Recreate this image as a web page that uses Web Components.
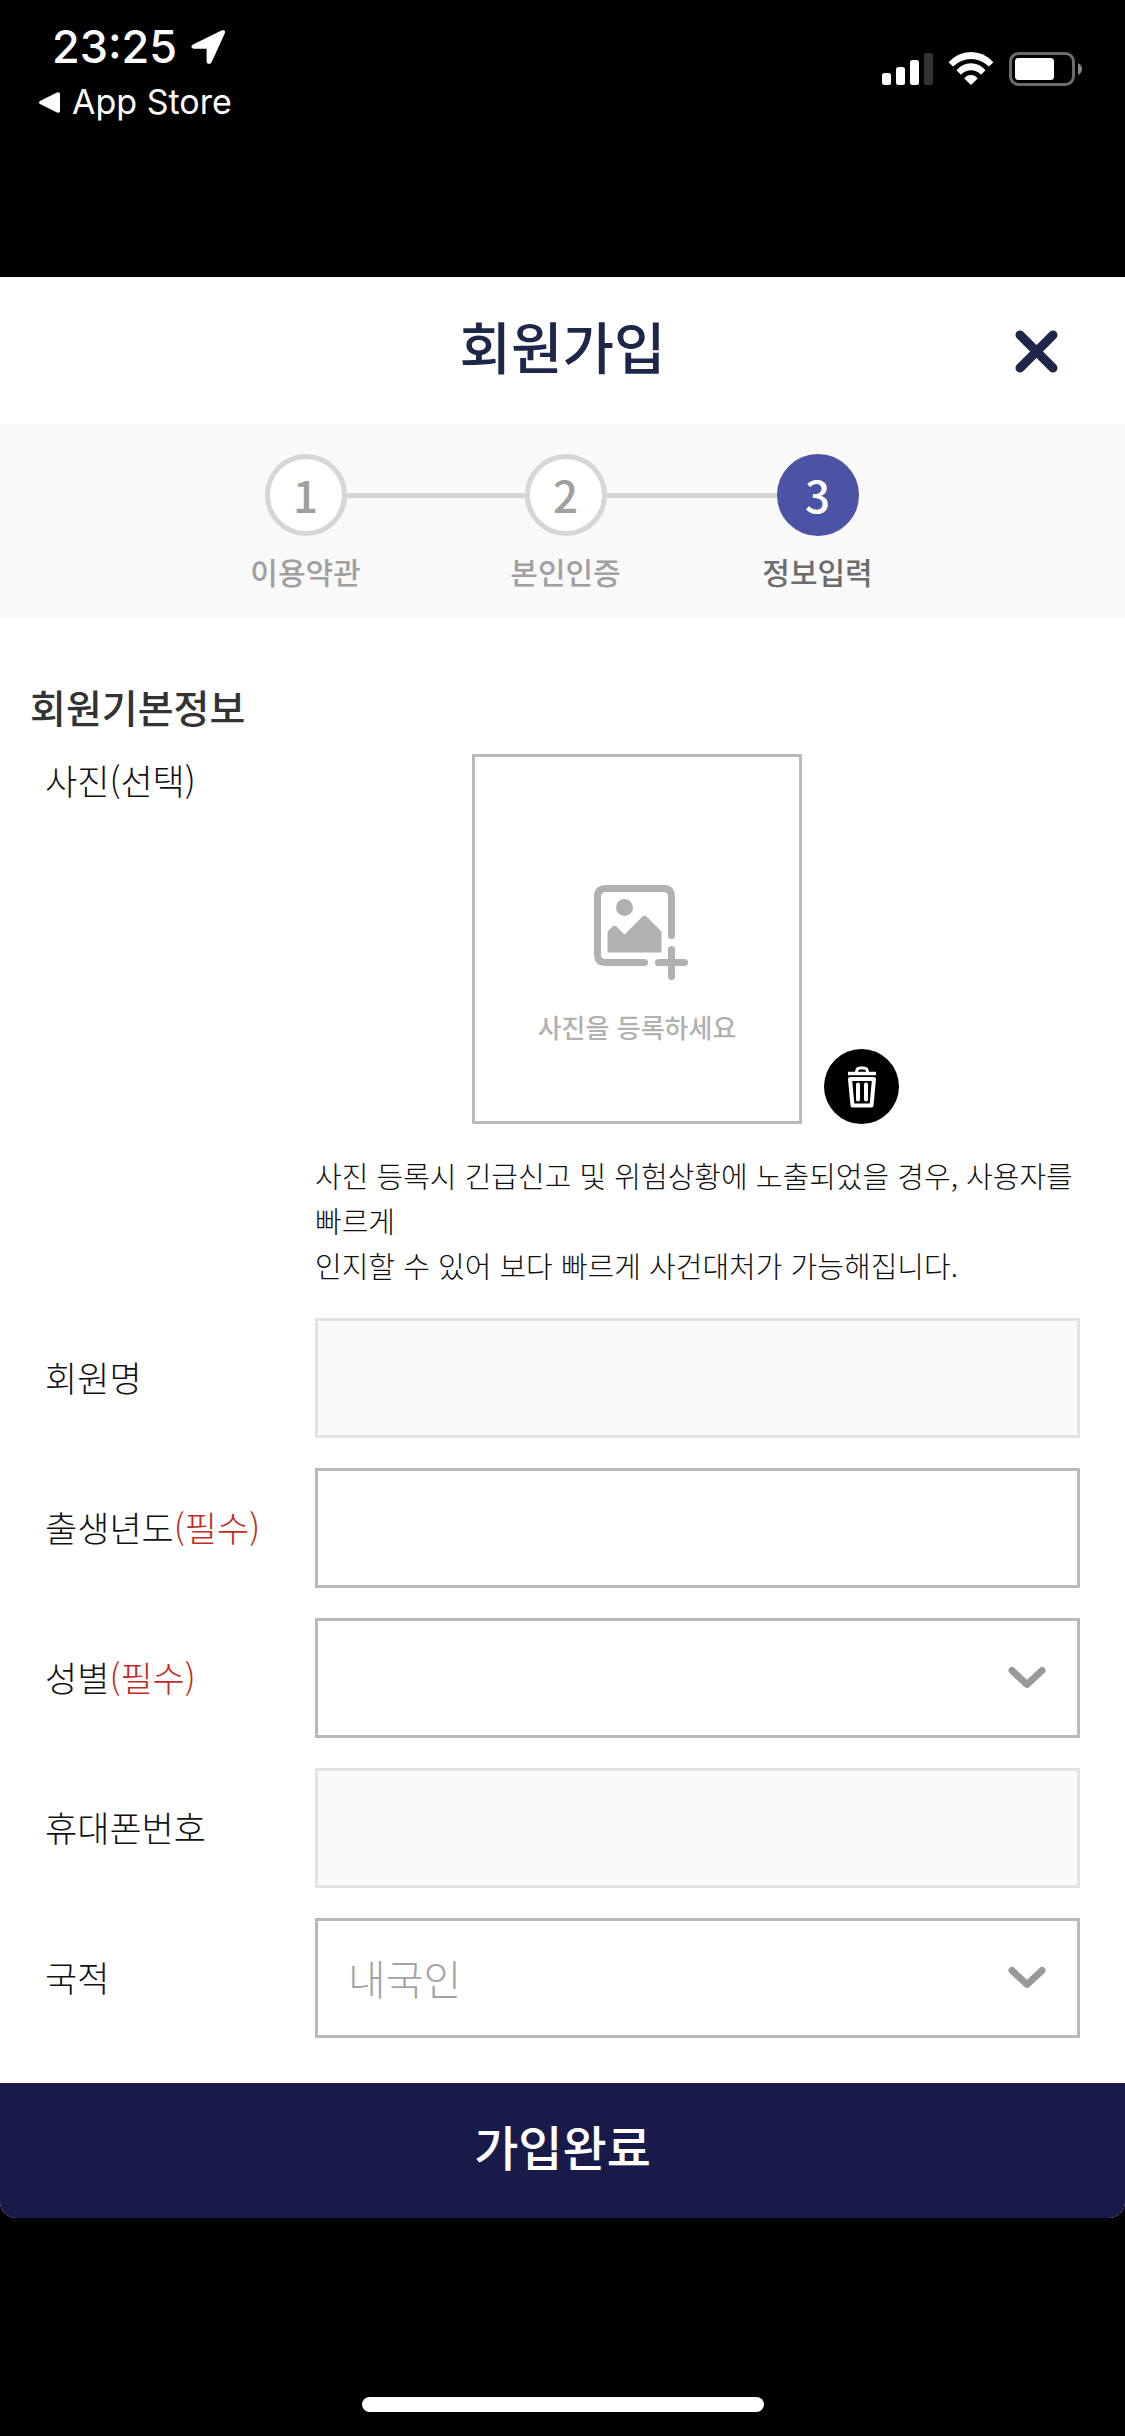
<!DOCTYPE html>
<html lang="ko">
<head>
<meta charset="utf-8">
<meta name="viewport" content="width=device-width, initial-scale=1">
<title>회원가입</title>
<style>
  html, body { margin: 0; background: #000; }
  body { font-family: "Noto Sans CJK KR", sans-serif; color: #111; word-break: keep-all; }
</style>
</head>
<body>
<signup-app></signup-app>

<template id="signup-app">
  <style>
    :host { display: flex; flex-direction: column; min-height: 100vh; background: #000; }
    main { background: #fff; border-radius: 0 0 16px 16px; overflow: hidden; }
    form { margin: 0; }
    .fields { padding: 62px 45px 45px; display: flex; flex-direction: column; gap: 30px; }
    .group { display: flex; flex-direction: column; gap: 23px; }
    h2 { margin: 0 -15px; font-size: 39px; line-height: 50px; font-weight: 500; color: #333; }
  </style>
  <phone-status time="23:25" back="App Store"></phone-status>
  <main>
    <page-header>회원가입</page-header>
    <step-bar>
      <step-item number="1">이용약관</step-item>
      <step-link style="--length: 178px"></step-link>
      <step-item number="2">본인인증</step-item>
      <step-link style="--length: 170px"></step-link>
      <step-item number="3" active>정보입력</step-item>
    </step-bar>
    <form>
      <div class="fields">
        <div class="group">
          <h2>회원기본정보</h2>
          <photo-field label="사진(선택)" prompt="사진을 등록하세요">사진 등록시 긴급신고 및 위험상황에 노출되었을 경우, 사용자를 빠르게<br>인지할 수 있어 보다 빠르게 사건대처가 가능해집니다.</photo-field>
        </div>
        <text-field label="회원명" disabled></text-field>
        <text-field label="출생년도" required></text-field>
        <select-field label="성별" required></select-field>
        <text-field label="휴대폰번호" disabled></text-field>
        <select-field label="국적" value="내국인"></select-field>
      </div>
      <submit-bar>가입완료</submit-bar>
    </form>
  </main>
  <home-indicator></home-indicator>
</template>

<template id="phone-status">
  <style>
    :host { display: flex; justify-content: space-between; align-items: flex-start; box-sizing: border-box; height: 277px; padding: 20px 42px 0 39px; color: #fff; font-family: Inter, sans-serif; }
    .time { display: flex; align-items: center; gap: 14px; padding-left: 13px; font-size: 45px; line-height: 54px; font-weight: 500; }
    .back { display: flex; align-items: center; gap: 12px; font-size: 34px; line-height: 40px; padding-top: 8px; color: #fff; text-decoration: none; }
    .icons { display: flex; align-items: center; gap: 15px; padding-top: 32px; }
    svg { display: block; }
  </style>
  <div>
    <div class="time"><span id="time"></span>
      <svg width="34" height="34" viewBox="0 0 34 34"><path d="M2 14.500 31 .3Q35 -.4 33.700 3.500L20.500 32.500Q19 34.500 16.700 33.600Q15.600 33 15.600 31.500V18.700H2.500Q-1.500 17 2 14.500Z" fill="#fff"/></svg>
    </div>
    <a class="back" href="#">
      <svg width="21" height="21" viewBox="0 0 21 21"><path d="M1 9 18 .5Q21 -.4 21 2V19Q20.800 21.400 18 20.500L1 12Q-1 10.500 1 9Z" fill="#fff"/></svg>
      <span id="back"></span>
    </a>
  </div>
  <div class="icons">
    <svg width="51" height="34" viewBox="0 0 51 34"><g fill="#fff"><rect y="21" width="9" height="12" rx="2.500"/><rect x="14" y="15" width="9" height="18" rx="2.500"/><rect x="28" y="8" width="9" height="25" rx="2.500"/></g><rect x="42" y="1" width="9" height="32" rx="2.500" fill="#333"/></svg>
    <svg width="46" height="34" viewBox="0 0 46 34"><g fill="#fff"><path d="M.6 10.300Q10 0 23 0T45.400 10.300L41 14.600Q33 7 23 7T5 14.600Z"/><path d="M8.500 18.300Q14.500 11.300 23 11.300T37.500 18.300L33 22.700Q29 18.200 23 18.200T13 22.700Z"/><path d="M16.300 26.400Q19 23 23 23T29.700 26.400L23 33Z"/></g></svg>
    <svg width="74" height="34" viewBox="0 0 74 34"><rect x="1.500" y="1.500" width="63" height="31" rx="8" fill="none" stroke="#6b6b6b" stroke-width="3"/><rect x="6" y="6" width="39" height="22" rx="3.500" fill="#fff"/><path d="M69 11Q73 13 73 17T69 23Z" fill="#858585"/></svg>
  </div>
</template>

<template id="page-header">
  <style>
    :host { display: grid; grid-template-columns: 1fr auto 1fr; align-items: center; height: 148px; padding: 0 67px; }
    h1 { grid-column: 2; margin: 0; padding-bottom: 12px; font-size: 56px; line-height: 72px; font-weight: 500; color: #1c2749; }
    button { justify-self: end; border: 0; background: none; padding: 0; cursor: pointer; }
    svg { display: block; }
  </style>
  <h1><slot></slot></h1>
  <button type="button" aria-label="닫기"><svg width="43" height="43" viewBox="0 0 43 43"><path d="M5 5 38 38M38 5 5 38" stroke="#1c2749" stroke-width="9" stroke-linecap="round"/></svg></button>
</template>

<template id="step-bar">
  <style>
    :host { display: flex; justify-content: center; padding: 29px 2px 29px 0; background: #f9f9f9; }
  </style>
  <slot></slot>
</template>

<template id="step-link">
  <style>
    :host { display: block; width: var(--length); height: 5px; margin-top: 39px; background: #d6d6d6; }
  </style>
</template>

<template id="step-item">
  <style>
    :host { display: flex; flex-direction: column; align-items: center; gap: 16px; width: 82px; color: #a0a0a0; }
    .dot { box-sizing: border-box; width: 82px; height: 82px; border: 5px solid #d6d6d6; border-radius: 50%; background: #fff; font-size: 44px; line-height: 70px; font-weight: 500; text-align: center; }
    .name { font-size: 30px; line-height: 38px; font-weight: 500; white-space: nowrap; }
    :host([active]) .dot { border-color: #4b53a5; background: #4b53a5; color: #fff; }
    :host([active]) .name { color: #6c6c6c; }
  </style>
  <div class="dot" id="number"></div>
  <div class="name"><slot></slot></div>
</template>

<template id="photo-field">
  <style>
    :host { display: grid; grid-template-columns: 270px 1fr; row-gap: 29px; }
    label { font-size: 35px; line-height: 52px; font-weight: 300; }
    .row { display: flex; align-items: flex-end; gap: 22px; padding-left: 157px; }
    button { font: inherit; padding: 0; cursor: pointer; }
    .pick { box-sizing: border-box; width: 330px; height: 370px; border: 3px solid #b9b9b9; background: #fff; display: flex; flex-direction: column; align-items: center; justify-content: center; gap: 28px; padding-top: 52px; color: #b1b1b1; font-size: 26px; line-height: 38px; font-weight: 500; }
    .pick svg { margin-left: 8px; }
    .trash { border: 0; background: none; }
    svg { display: block; }
    p { grid-column: 2; margin: 0; font-size: 29px; line-height: 45px; font-weight: 300; }
  </style>
  <label for="pick" id="label"></label>
  <div class="row">
    <button class="pick" id="pick" type="button">
      <svg width="94" height="95" viewBox="0 0 94 95"><path d="M77.500 50.500V12Q77.500 3.500 69.500 3.500H12Q3.500 3.500 3.500 12V69.500Q3.500 77.500 12 77.500H50.500M64.500 77.500H90.500M77.500 64.500V91.500" fill="none" stroke="#b1b1b1" stroke-width="7" stroke-linecap="round"/><circle cx="30.500" cy="22.500" r="8.500" fill="#b1b1b1"/><path d="M13.500 67.500V46.500L18.500 41.500Q20.500 39.800 22.500 41.500L30.500 49.500 48.500 31.500Q50.500 29.800 52.500 31.500L67.500 46.500V67.500Z" fill="#b1b1b1"/></svg>
      <span id="prompt"></span>
    </button>
    <button class="trash" type="button" aria-label="사진 삭제">
      <svg width="75" height="75" viewBox="0 0 75 75"><circle cx="37.500" cy="37.500" r="37.500"/><g fill="none" stroke="#fff"><path d="M24 24.500H52" stroke-width="3.500"/><path d="M32.500 23.500Q32.500 19 36 19H40Q43.500 19 43.500 23.500" stroke-width="3"/><path d="M26 30H50L47.500 56.500H28.500Z" stroke-width="4" stroke-linejoin="round"/><path d="M34 35.500V50.500M42 35.500V50.500" stroke-width="4" stroke-linecap="round"/></g></svg>
    </button>
  </div>
  <p><slot></slot></p>
</template>

<template id="text-field">
  <style>
    :host { display: grid; grid-template-columns: 270px 1fr; align-items: center; }
    label { padding-bottom: 2px; font-size: 35px; line-height: 52px; font-weight: 300; white-space: nowrap; }
    .required { color: #c42a22; }
    input { box-sizing: border-box; width: 100%; height: 120px; margin: 0; border: 3px solid #b9b9b9; border-radius: 0; background: #fff; padding: 0 32px; font: inherit; font-size: 41px; font-weight: 300; }
    input:disabled { border-color: #e3e3e3; background: #fafafa; }
  </style>
  <label for="control"><span id="label"></span></label>
  <input id="control" type="text">
</template>

<template id="select-field">
  <style>
    :host { display: grid; grid-template-columns: 270px 1fr; align-items: center; }
    label { padding-bottom: 2px; font-size: 35px; line-height: 52px; font-weight: 300; white-space: nowrap; }
    .required { color: #c42a22; }
    select, svg { grid-column: 2; grid-row: 1; }
    select { appearance: none; box-sizing: border-box; width: 100%; height: 120px; margin: 0; border: 3px solid #b9b9b9; border-radius: 0; background: #fff; padding: 0 80px 2px 30px; font: inherit; font-size: 41px; font-weight: 300; color: #a3a3a3; }
    svg { justify-self: end; margin-right: 34px; pointer-events: none; z-index: 1; }
  </style>
  <label for="control"><span id="label"></span></label>
  <select id="control"><option></option></select>
  <svg width="38" height="24" viewBox="0 0 38 24"><path d="M4 4.500 19 18.500 34 4.500" fill="none" stroke="#999" stroke-width="7" stroke-linecap="round" stroke-linejoin="round"/></svg>
</template>

<template id="submit-bar">
  <style>
    :host { display: block; }
    button { display: block; width: 100%; height: 135px; border: 0; padding: 0 0 12px; background: #181b4a; color: #fff; font: inherit; font-size: 48px; line-height: 64px; font-weight: 500; cursor: pointer; }
  </style>
  <button type="submit"><slot></slot></button>
</template>

<template id="home-indicator">
  <style>
    :host { display: flex; justify-content: center; margin-top: auto; padding-bottom: 24px; }
    div { width: 402px; height: 15px; border-radius: 8px; background: #fff; }
  </style>
  <div></div>
</template>

<script>
  class TemplateElement extends HTMLElement {
    connectedCallback() {
      if (this.shadowRoot) return;
      const root = this.attachShadow({ mode: "open" });
      root.append(document.getElementById(this.localName).content.cloneNode(true));
      this.setup(root);
    }
    setup() {}
    fill(root, ...names) {
      for (const name of names) root.getElementById(name).textContent = this.getAttribute(name);
    }
  }

  class PhoneStatus extends TemplateElement {
    setup(root) { this.fill(root, "time", "back"); }
  }
  class PageHeader extends TemplateElement {}
  class StepBar extends TemplateElement {}
  class StepLink extends TemplateElement {}
  class StepItem extends TemplateElement {
    setup(root) { this.fill(root, "number"); }
  }
  class PhotoField extends TemplateElement {
    setup(root) { this.fill(root, "label", "prompt"); }
  }
  class TextField extends TemplateElement {
    setup(root) {
      this.fill(root, "label");
      const control = root.getElementById("control");
      control.disabled = this.hasAttribute("disabled");
      if (this.hasAttribute("required")) {
        control.required = true;
        const mark = document.createElement("span");
        mark.className = "required";
        mark.textContent = "(필수)";
        root.querySelector("label").append(mark);
      }
    }
  }
  class SelectField extends TextField {
    setup(root) {
      super.setup(root);
      root.querySelector("option").textContent = this.getAttribute("value") || "";
    }
  }
  class SubmitBar extends TemplateElement {}
  class HomeIndicator extends TemplateElement {}
  class SignupApp extends TemplateElement {}

  customElements.define("phone-status", PhoneStatus);
  customElements.define("page-header", PageHeader);
  customElements.define("step-bar", StepBar);
  customElements.define("step-link", StepLink);
  customElements.define("step-item", StepItem);
  customElements.define("photo-field", PhotoField);
  customElements.define("text-field", TextField);
  customElements.define("select-field", SelectField);
  customElements.define("submit-bar", SubmitBar);
  customElements.define("home-indicator", HomeIndicator);
  customElements.define("signup-app", SignupApp);
</script>
</body>
</html>
